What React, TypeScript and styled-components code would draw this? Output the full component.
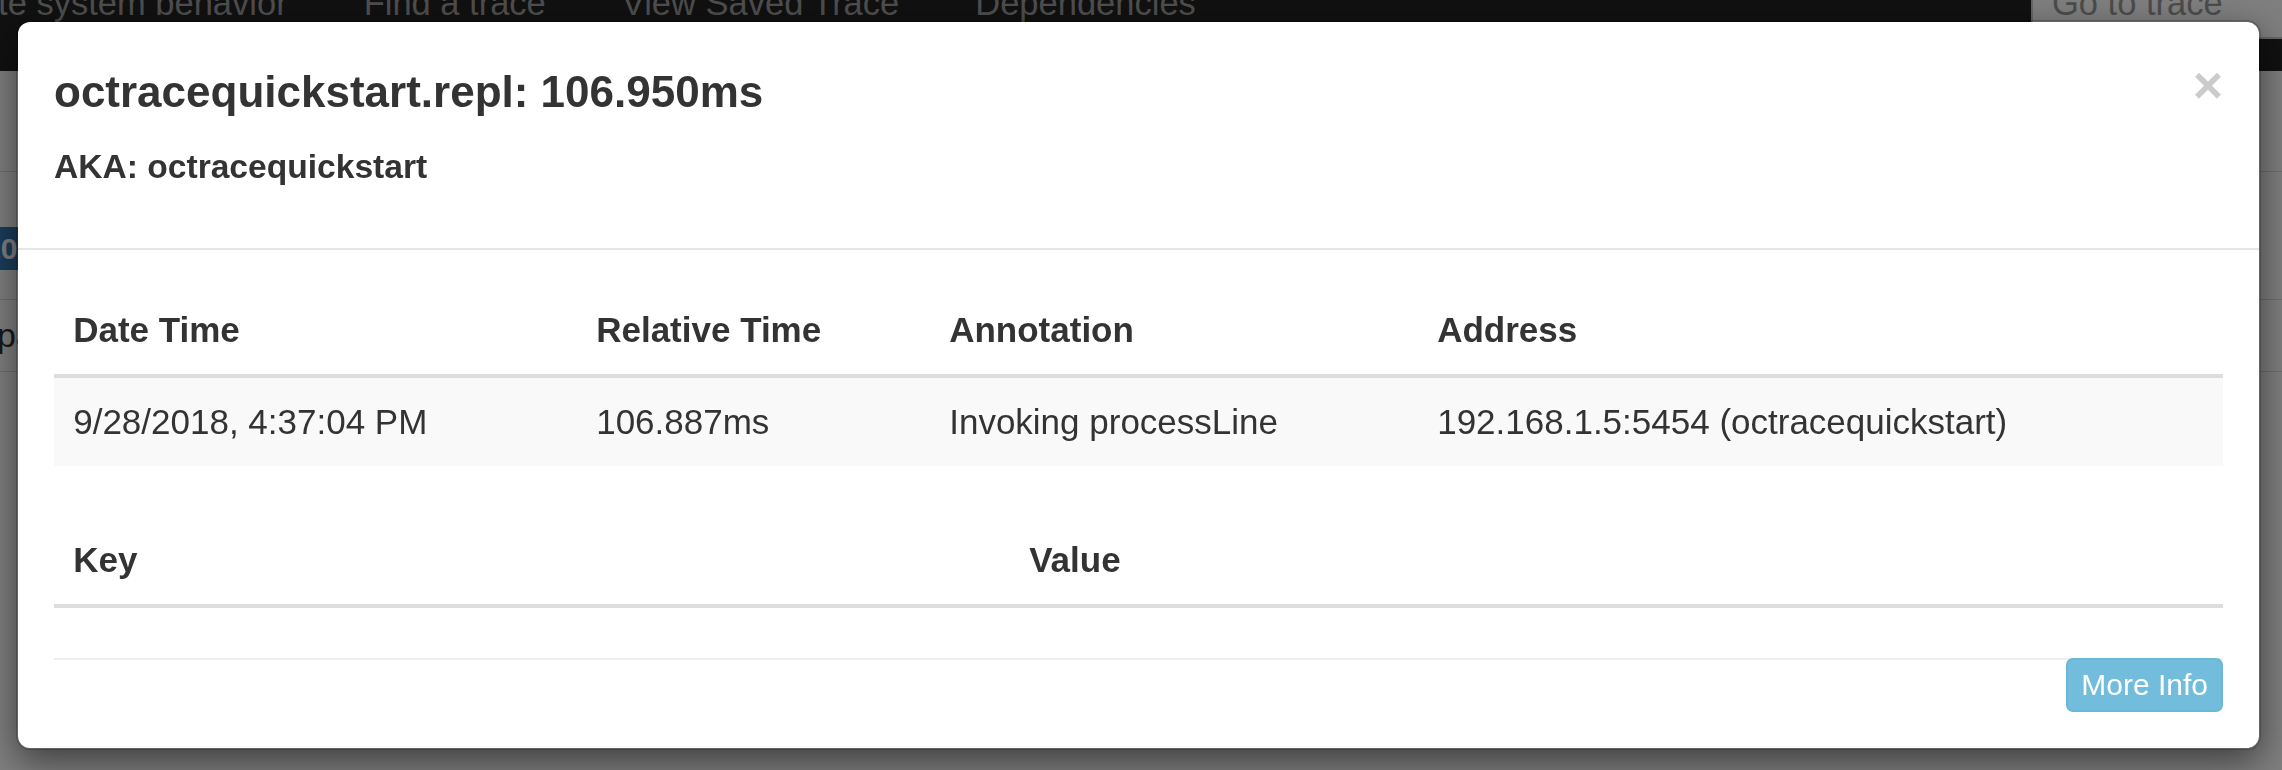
import React from "react";
import styled, { createGlobalStyle } from "styled-components";

const GlobalStyle = createGlobalStyle`
  html, body { margin: 0; padding: 0; }
  body {
    width: 2282px;
    height: 770px;
    overflow: hidden;
    background: #fff;
    font-family: "Liberation Sans", Arial, Helvetica, sans-serif;
    color: #333;
  }
  * { box-sizing: border-box; }
`;

/* ---------- page behind the modal ---------- */

const Page = styled.div`
  width: 2282px;
  height: 770px;
  overflow: hidden;
  background: #fff;
`;

const Navbar = styled.header`
  height: 71px;
  background: #222;
  display: flex;
  align-items: flex-start;
`;

const NavLinks = styled.nav`
  display: flex;
  gap: 76px;
  margin-left: -140px;
  margin-top: -21px;
`;

const NavLink = styled.a`
  font-size: 34.5px;
  line-height: 48px;
  color: #9d9d9d;
  white-space: nowrap;
  text-decoration: none;
`;

const SearchBox = styled.div`
  margin-left: auto;
  margin-right: -69px;
  margin-top: -49px;
  flex-shrink: 0;
  width: 320px;
  height: 88px;
  padding: 26px 19px 0;
  background: #fff;
  border: 2px solid #ccc;
  border-radius: 10px;
  font-size: 34.5px;
  line-height: 48px;
  color: #999;
  white-space: nowrap;
`;

const Band = styled.div<{ $h: number; $line?: boolean }>`
  height: ${(p) => p.$h}px;
  border-bottom: ${(p) => (p.$line ? "1px solid #ddd" : "none")};
  display: flex;
  align-items: center;
  font-size: 34px;
  white-space: nowrap;
`;

const SpanBar = styled.div`
  height: 43px;
  width: 420px;
  margin-left: -20px;
  padding-left: 4px;
  background: #337ab7;
  color: #fff;
  font-size: 30px;
  line-height: 43px;
  font-weight: 700;
`;

const RowText = styled.span`
  margin-left: -20px;
  color: #333;
`;

/* ---------- modal ---------- */

const Overlay = styled.div`
  position: fixed;
  inset: 0;
  background: rgba(0, 0, 0, 0.5);
  display: flex;
  align-items: flex-start;
  padding: 20px 0 0 16px;
`;

const Modal = styled.div`
  width: 2245px;
  background: #fff;
  background-clip: padding-box;
  border: 2px solid rgba(0, 0, 0, 0.2);
  border-radius: 14px;
  box-shadow: 0 12px 36px rgba(0, 0, 0, 0.5);
`;

const ModalHeader = styled.div`
  padding: 39px 36px 36px;
  border-bottom: 2px solid #e5e5e5;
`;

const HeaderTop = styled.div`
  display: flex;
  align-items: flex-start;
`;

const Title = styled.h4`
  flex: 1;
  margin: 0;
  font-size: 44px;
  line-height: 62px;
  font-weight: 700;
  color: #333;
`;

const CloseButton = styled.button`
  margin-top: -2px;
  padding: 0;
  background: none;
  border: 0;
  font-family: inherit;
  font-size: 52px;
  font-weight: 700;
  line-height: 1;
  color: #000;
  opacity: 0.2;
  cursor: pointer;
`;

const Subtitle = styled.h5`
  margin: 20px 0 21px;
  font-size: 33.6px;
  line-height: 48px;
  font-weight: 700;
  color: #333;
`;

const ModalBody = styled.div`
  padding: 36px;
`;

const Table = styled.table`
  width: 100%;
  table-layout: fixed;
  border-collapse: separate;
  border-spacing: 0;
  margin-bottom: 50px;
`;

const Th = styled.th`
  text-align: left;
  vertical-align: bottom;
  font-size: 35px;
  line-height: 48px;
  font-weight: 700;
  padding: 20px 19.2px;
  border-bottom: 4px solid #ddd;
  white-space: nowrap;
`;

const Td = styled.td<{ $striped?: boolean }>`
  font-size: 35px;
  line-height: 48px;
  padding: 20px 19.2px;
  white-space: nowrap;
  background: ${(p) => (p.$striped ? "#f9f9f9" : "transparent")};
`;

const FooterBar = styled.div`
  display: flex;
  justify-content: flex-end;
  border-top: 2px solid #eee;
`;

const MoreButton = styled.button`
  margin-top: -2px;
  padding: 3px 13px;
  font-family: inherit;
  font-size: 30px;
  line-height: 44px;
  color: #fff;
  background: #72bddb;
  border: 2px solid #6ab7d8;
  border-radius: 7px;
  cursor: pointer;
`;

const annotationCols = [523, 353, 488, 805];
const annotationHeads = ["Date Time", "Relative Time", "Annotation", "Address"];
const annotationRows = [
  [
    "9/28/2018, 4:37:04 PM",
    "106.887ms",
    "Invoking processLine",
    "192.168.1.5:5454 (octracequickstart)",
  ],
];

const tagCols = [956, 1213];
const tagHeads = ["Key", "Value"];

export default function App() {
  return (
    <>
      <GlobalStyle />
      <Page>
        <Navbar>
          <NavLinks>
            <NavLink>Investigate system behavior</NavLink>
            <NavLink>Find a trace</NavLink>
            <NavLink>View Saved Trace</NavLink>
            <NavLink>Dependencies</NavLink>
          </NavLinks>
          <SearchBox>Go to trace</SearchBox>
        </Navbar>
        <Band $h={101} $line />
        <Band $h={55} />
        <Band $h={43}>
          <SpanBar>105.950ms</SpanBar>
        </Band>
        <Band $h={30} $line />
        <Band $h={72} $line>
          <RowText>span</RowText>
        </Band>
        <Band $h={120} />
      </Page>

      <Overlay>
        <Modal>
          <ModalHeader>
            <HeaderTop>
              <Title>octracequickstart.repl: 106.950ms</Title>
              <CloseButton aria-label="Close">×</CloseButton>
            </HeaderTop>
            <Subtitle>AKA: octracequickstart</Subtitle>
          </ModalHeader>
          <ModalBody>
            <Table>
              <colgroup>
                {annotationCols.map((w, i) => (
                  <col key={i} style={{ width: w }} />
                ))}
              </colgroup>
              <thead>
                <tr>
                  {annotationHeads.map((h) => (
                    <Th key={h}>{h}</Th>
                  ))}
                </tr>
              </thead>
              <tbody>
                {annotationRows.map((row, r) => (
                  <tr key={r}>
                    {row.map((c, i) => (
                      <Td key={i} $striped={r % 2 === 0}>
                        {c}
                      </Td>
                    ))}
                  </tr>
                ))}
              </tbody>
            </Table>
            <Table>
              <colgroup>
                {tagCols.map((w, i) => (
                  <col key={i} style={{ width: w }} />
                ))}
              </colgroup>
              <thead>
                <tr>
                  {tagHeads.map((h) => (
                    <Th key={h}>{h}</Th>
                  ))}
                </tr>
              </thead>
              <tbody />
            </Table>
            <FooterBar>
              <MoreButton>More Info</MoreButton>
            </FooterBar>
          </ModalBody>
        </Modal>
      </Overlay>
    </>
  );
}
